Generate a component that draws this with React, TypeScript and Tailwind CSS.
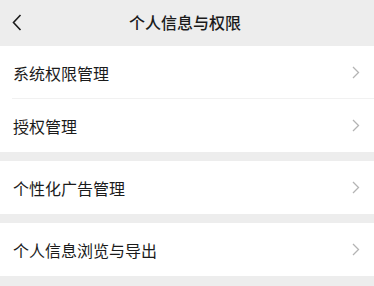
import React from "react";

const font = { fontFamily: '"Noto Sans CJK SC", "Noto Sans", sans-serif' };

function Chevron() {
  return (
    <svg width="8" height="13" viewBox="0 0 8 13" className="shrink-0">
      <path d="M1 1l5.5 5.5L1 12" fill="none" stroke="#b4b4b4" strokeWidth="1.3" />
    </svg>
  );
}

function Row({ label, divider }: { label: string; divider?: boolean }) {
  return (
    <div className="relative flex h-[53px] items-center justify-between bg-white pl-[13px] pr-[14px]">
      <span className="text-[16px] leading-none text-[#1b1b1b]">{label}</span>
      <Chevron />
      {divider && <div className="absolute bottom-0 left-[12px] right-0 h-px bg-[#f1f1f1]" />}
    </div>
  );
}

export default function App() {
  return (
    <div className="h-[286px] w-[374px] overflow-hidden bg-[#ededed]" style={font}>
      <div className="relative flex h-[46px] items-center justify-center pb-[2px] pr-[4px]">
        <svg width="10" height="18" viewBox="0 0 10 18" className="absolute left-[12px] top-[14px]">
          <path d="M8.5 1L1.5 8.5l7 7.5" fill="none" stroke="#1b1b1b" strokeWidth="1.6" />
        </svg>
        <span className="text-[16px] font-medium text-[#1b1b1b]">个人信息与权限</span>
      </div>
      <div className="flex flex-col">
        <Row label="系统权限管理" divider />
        <Row label="授权管理" />
      </div>
      <div className="mt-[9px]">
        <Row label="个性化广告管理" />
      </div>
      <div className="mt-[9px]">
        <Row label="个人信息浏览与导出" />
      </div>
    </div>
  );
}
